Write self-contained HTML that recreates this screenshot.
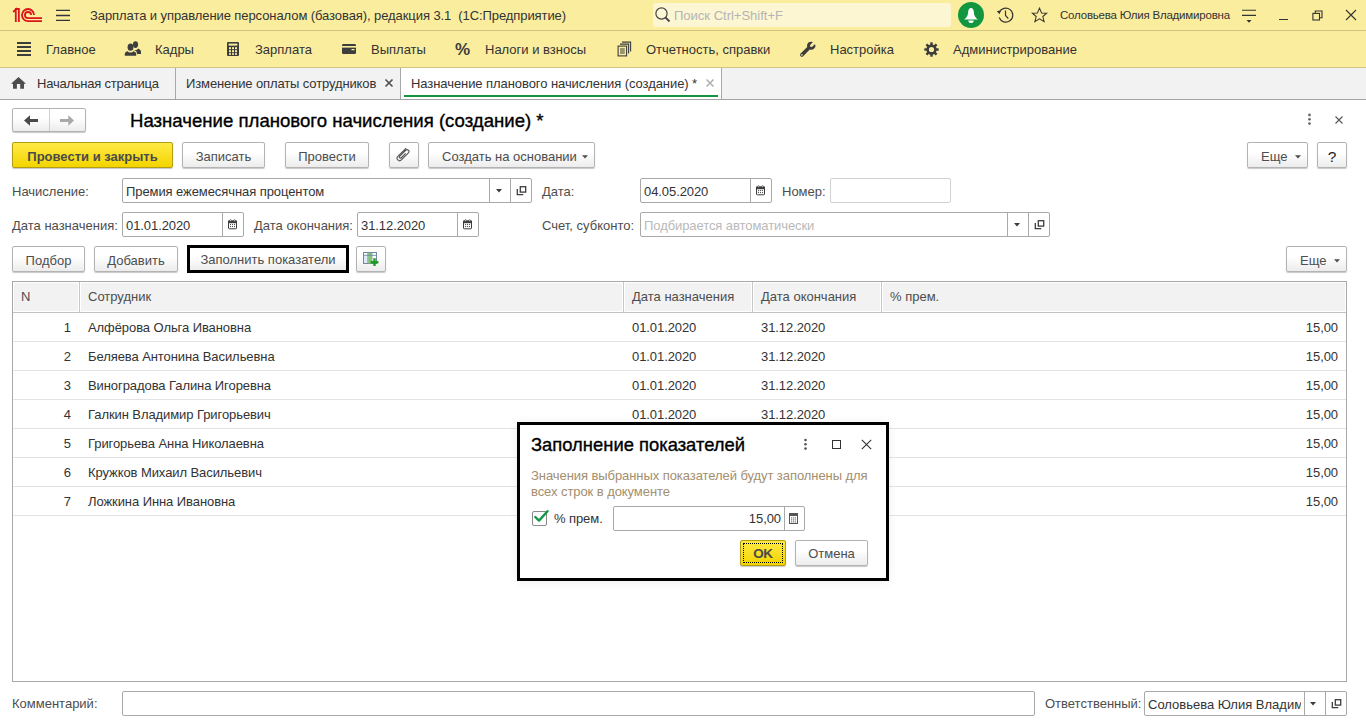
<!DOCTYPE html>
<html><head><meta charset="utf-8">
<style>
*{box-sizing:border-box;margin:0;padding:0}
html,body{width:1366px;height:728px;overflow:hidden;background:#fff;font-family:"Liberation Sans",sans-serif;font-size:13px;color:#333}
.a{position:absolute}
.t{position:absolute;white-space:nowrap;line-height:15px;font-size:13px}
#top{position:absolute;left:0;top:0;width:1366px;height:31px;background:#fbed9e;border-bottom:1px solid #d3c37e}
#menu{position:absolute;left:0;top:31px;width:1366px;height:37px;background:#fbed9e;border-bottom:1px solid #d2c386}
#tabs{position:absolute;left:0;top:68px;width:1366px;height:32px;background:#f2f2f2;border-bottom:1px solid #a3a3a3}
.btn{position:absolute;border:1px solid #b3b3b3;border-radius:2px;background:linear-gradient(#fff 0%,#fff 40%,#ececec 100%);box-shadow:0 1px 1px rgba(0,0,0,.22);color:#4d4d4d;text-align:center;line-height:27px;font-size:13px;white-space:nowrap}
.fld{position:absolute;border:1px solid #a9a9a9;border-radius:2px;background:#fff}
.lbl{position:absolute;white-space:nowrap;line-height:15px;font-size:13px;color:#4d4d4d}
.val{position:absolute;white-space:nowrap;line-height:15px;font-size:13px;color:#333;letter-spacing:-0.08px}
.mi{color:#333}
.tb{color:#333}
.dv{position:absolute;top:0;bottom:0;width:1px;background:#a9a9a9}
</style></head><body>
<!-- TOP BAR -->
<div id="top"></div>
<svg class="a" style="left:12px;top:7px" width="32" height="16" viewBox="0 0 32 16">
 <g fill="none" stroke="#d9141b" stroke-width="1.8">
  <path d="M1.2 5 L3.8 2.4 V14.9"/>
  <path d="M3 2 H6.85 V14.9"/>
  <path d="M22.05 8.05 A6.05 6.05 0 1 0 16 14.1 H30"/>
  <path d="M19.07 8.05 A3.07 3.07 0 1 0 16 11.12 H30"/>
 </g>
</svg>
<svg class="a" style="left:55px;top:9px" width="16" height="13" viewBox="0 0 16 13">
 <g stroke="#333" stroke-width="1.3"><path d="M1 1.4H15M1 6.5H15M1 11.4H15"/></g>
</svg>
<div class="t" style="left:90px;top:8px;color:#333;font-size:13px;letter-spacing:-0.08px">Зарплата и управление персоналом (базовая), редакция 3.1&nbsp; (1С:Предприятие)</div>
<div class="a" style="left:653px;top:3px;width:298px;height:24px;background:#fdf6d2;border-radius:3px"></div>
<svg class="a" style="left:654px;top:6px" width="18" height="18" viewBox="0 0 18 18">
 <circle cx="7.5" cy="7.5" r="5.6" fill="none" stroke="#444" stroke-width="1.2"/>
 <path d="M11.5 11.5 L15.5 15.5" stroke="#444" stroke-width="1.8"/>
</svg>
<div class="t" style="left:674px;top:8px;color:#b4b4b4">Поиск Ctrl+Shift+F</div>
<svg class="a" style="left:958px;top:2px" width="26" height="26" viewBox="0 0 26 26">
 <circle cx="13" cy="13" r="13" fill="#12963f"/>
 <path d="M13 6 C11.5 6 10.4 7.2 10.2 9.5 C9.9 13 9.4 15 6 17.6 H20 C16.6 15 16.1 13 15.8 9.5 C15.6 7.2 14.5 6 13 6Z" fill="#fff"/>
 <path d="M10.2 18.4 H15.8 C15.6 20 14.5 21 13 21 C11.5 21 10.4 20 10.2 18.4Z" fill="#fff"/>
</svg>
<svg class="a" style="left:996px;top:6px" width="19" height="18" viewBox="0 0 19 18">
 <path d="M3.3 6.5 A7 7 0 1 1 3.2 11.5" fill="none" stroke="#333" stroke-width="1.2"/>
 <path d="M0.8 5.2 L4.8 4.2 L3.6 8.2Z" fill="#333"/>
 <path d="M9.5 4.5 V9.5 L12.3 12.6" fill="none" stroke="#333" stroke-width="1.2"/>
</svg>
<svg class="a" style="left:1030.5px;top:7px" width="17" height="17" viewBox="0 0 18 18">
 <path d="M9 1.2 L11.2 6.3 L16.6 6.6 L12.5 10.1 L13.9 15.5 L9 12.5 L4.1 15.5 L5.5 10.1 L1.4 6.6 L6.8 6.3Z" fill="none" stroke="#333" stroke-width="1.1" stroke-linejoin="miter"/>
</svg>
<div class="t" style="left:1060px;top:8px;color:#333;font-size:11.5px;letter-spacing:-0.2px">Соловьева Юлия Владимировна</div>
<svg class="a" style="left:1241px;top:8px" width="16" height="16" viewBox="0 0 16 16">
 <path d="M1 2.3H15M1 7.4H15" stroke="#333" stroke-width="1.1"/>
 <path d="M5.5 12 H10.5 L8 14.8Z" fill="#333"/>
</svg>
<div class="a" style="left:1279px;top:18.5px;width:9px;height:1.2px;background:#333"></div>
<svg class="a" style="left:1312px;top:10px" width="11" height="11" viewBox="0 0 11 11">
 <path d="M3.3 3.2 V1 H10 V7.7 H7.8" fill="none" stroke="#333" stroke-width="1.1"/>
 <rect x="0.9" y="3.4" width="6.6" height="6.6" fill="none" stroke="#333" stroke-width="1.1"/>
</svg>
<svg class="a" style="left:1345px;top:9px" width="12" height="12" viewBox="0 0 12 12">
 <path d="M1 1L11 11M11 1L1 11" stroke="#333" stroke-width="1.1"/>
</svg>

<!-- MENU -->
<div id="menu"></div>
<svg class="a" style="left:17px;top:42px" width="14" height="14" viewBox="0 0 14 14">
 <g fill="#3d3d3d"><rect x="0" y="0" width="14" height="2"/><rect x="0" y="4" width="14" height="2"/><rect x="0" y="8" width="14" height="2"/><rect x="0" y="12" width="14" height="2"/></g>
</svg>
<div class="t mi" style="left:46px;top:42px">Главное</div>
<svg class="a" style="left:124px;top:41px" width="18" height="16" viewBox="0 0 18 16">
 <g fill="#3d3d3d">
  <ellipse cx="11.5" cy="3.6" rx="2.6" ry="3.4"/>
  <path d="M9 7.5 C9.5 8.6 10.5 9 11.5 9 C12.5 9 13.5 8.6 14 7.5 C16.3 8.3 17 9.5 17 11 V13 H13 C13 11 12 9.8 10.5 9.3Z"/>
  <ellipse cx="6.5" cy="6.2" rx="2.9" ry="3.6"/>
  <path d="M3.8 10.2 C4.4 11.2 5.4 11.6 6.5 11.6 C7.6 11.6 8.6 11.2 9.2 10.2 C11.7 10.8 12.2 11.9 12.2 13.2 V14.8 H0.8 V13.2 C0.8 11.9 1.3 10.8 3.8 10.2Z"/>
 </g>
</svg>
<div class="t mi" style="left:155px;top:42px">Кадры</div>
<svg class="a" style="left:226px;top:41px" width="14" height="16" viewBox="0 0 14 16">
 <rect x="1" y="1" width="12" height="14" rx="1" fill="#3d3d3d"/>
 <rect x="2.6" y="2.6" width="8.8" height="2" fill="#fbed9e"/>
 <g fill="#fbed9e">
  <rect x="3" y="6.2" width="2" height="2"/><rect x="6" y="6.2" width="2" height="2"/><rect x="9" y="6.2" width="2" height="2"/>
  <rect x="3" y="9.2" width="2" height="2"/><rect x="6" y="9.2" width="2" height="2"/><rect x="9" y="9.2" width="2" height="2"/>
  <rect x="3" y="12.2" width="2" height="1.6"/><rect x="6" y="12.2" width="2" height="1.6"/><rect x="9" y="12.2" width="2" height="1.6"/>
 </g>
</svg>
<div class="t mi" style="left:255px;top:42px">Зарплата</div>
<svg class="a" style="left:341px;top:43px" width="16" height="12" viewBox="0 0 16 12">
 <rect x="1" y="1" width="14" height="10" rx="1.2" fill="#3d3d3d"/>
 <rect x="1" y="3" width="14" height="1.6" fill="#fbed9e"/>
 <rect x="10.5" y="6" width="3" height="1.2" fill="#fbed9e"/>
</svg>
<div class="t mi" style="left:371px;top:42px">Выплаты</div>
<div class="t" style="left:455px;top:41px;font-size:17px;line-height:18px;font-weight:bold;color:#3d3d3d">%</div>
<div class="t mi" style="left:485px;top:42px">Налоги и взносы</div>
<svg class="a" style="left:617px;top:41px" width="15" height="16" viewBox="0 0 15 16">
 <g fill="none" stroke="#3d3d3d" stroke-width="1.1">
  <path d="M5 1.1 H13.6 V10.5"/>
  <path d="M3 3.1 H11.6 V12.5"/>
 </g>
 <rect x="1.1" y="5.1" width="8.5" height="9.8" fill="#fbed9e" stroke="#3d3d3d" stroke-width="1.1"/>
 <path d="M3 8H7.8M3 10H7.8M3 12H7.8" stroke="#3d3d3d" stroke-width="1"/>
</svg>
<div class="t mi" style="left:646px;top:42px">Отчетность, справки</div>
<svg class="a" style="left:799px;top:40px" width="18" height="18" viewBox="0 0 18 18">
 <path d="M15.8 4.2 L13 6.9 L11.2 6.8 L11.1 5 L13.8 2.2 C11.8 1.3 9.3 2 8.4 4.1 C8 5 7.9 6 8.2 7 L1.6 13.6 C0.9 14.3 0.9 15.5 1.6 16.2 C2.3 16.9 3.5 16.9 4.2 16.2 L10.8 9.6 C13.7 10.5 16.5 8.4 16.5 5.6 C16.5 5.1 16.3 4.6 15.8 4.2Z" fill="#3d3d3d"/>
 <circle cx="2.9" cy="14.9" r="0.8" fill="#fbed9e"/>
</svg>
<div class="t mi" style="left:830px;top:42px">Настройка</div>
<svg class="a" style="left:924px;top:42px" width="15" height="15" viewBox="0 0 15 15">
 <g fill="#3d3d3d"><rect x="6.3" y="0.3" width="2.4" height="3.2" transform="rotate(0 7.5 7.5)"/><rect x="6.3" y="0.3" width="2.4" height="3.2" transform="rotate(45 7.5 7.5)"/><rect x="6.3" y="0.3" width="2.4" height="3.2" transform="rotate(90 7.5 7.5)"/><rect x="6.3" y="0.3" width="2.4" height="3.2" transform="rotate(135 7.5 7.5)"/><rect x="6.3" y="0.3" width="2.4" height="3.2" transform="rotate(180 7.5 7.5)"/><rect x="6.3" y="0.3" width="2.4" height="3.2" transform="rotate(225 7.5 7.5)"/><rect x="6.3" y="0.3" width="2.4" height="3.2" transform="rotate(270 7.5 7.5)"/><rect x="6.3" y="0.3" width="2.4" height="3.2" transform="rotate(315 7.5 7.5)"/></g>
 <circle cx="7.5" cy="7.5" r="3.9" fill="none" stroke="#3d3d3d" stroke-width="2.6"/>
</svg>
<div class="t mi" style="left:953px;top:42px">Администрирование</div>

<!-- TABS -->
<div id="tabs"></div>
<svg class="a" style="left:11px;top:76px" width="16" height="13" viewBox="0 0 16 13">
 <path d="M7.5 0.9 L15 7.7 H13 V12.8 H9.2 V7.9 H5.9 V12.8 H2 V7.7 H0Z" fill="#4d4d4d"/>
</svg>
<div class="t tb" style="left:37px;top:76px;letter-spacing:-0.22px">Начальная страница</div>
<div class="a" style="left:175px;top:68px;width:1px;height:31px;background:#a8a8a8"></div>
<div class="t tb" style="left:186px;top:76px;letter-spacing:-0.12px">Изменение оплаты сотрудников</div>
<svg class="a" style="left:384px;top:78px" width="10" height="10" viewBox="0 0 10 10"><path d="M1.5 1.5L8.5 8.5M8.5 1.5L1.5 8.5" stroke="#4d4d4d" stroke-width="1.6"/></svg>
<div class="a" style="left:400px;top:68px;width:322px;height:32px;background:#fff;border-left:1px solid #a8a8a8;border-right:1px solid #a8a8a8;border-bottom:1px solid #a3a3a3"></div>
<div class="a" style="left:404px;top:95px;width:314px;height:2px;background:#12963f"></div>
<div class="t tb" style="left:411px;top:76px;letter-spacing:-0.07px">Назначение планового начисления (создание) *</div>
<svg class="a" style="left:705px;top:78px" width="10" height="10" viewBox="0 0 10 10"><path d="M1.5 1.5L8.5 8.5M8.5 1.5L1.5 8.5" stroke="#b0b0b0" stroke-width="1.6"/></svg>

<!-- FORM HEADER -->
<div class="btn" style="left:12px;top:108px;width:74px;height:24px"></div>
<div class="a" style="left:49px;top:109px;width:1px;height:22px;background:#cfcfcf"></div>
<svg class="a" style="left:23px;top:114px" width="16" height="13" viewBox="0 0 16 13">
 <path d="M1 6.5 L7 1.3 V5 H15 V8 H7 V11.8Z" fill="#4a4a4a"/>
</svg>
<svg class="a" style="left:59px;top:114px" width="16" height="13" viewBox="0 0 16 13">
 <path d="M15 6.5 L9.3 1.3 V5 H1 V8 H9.3 V11.8Z" fill="#a9a9a9"/>
</svg>
<div class="t" style="left:130px;top:110.5px;font-size:18.6px;line-height:20px;color:#000;-webkit-text-stroke:0.35px #000">Назначение планового начисления (создание) *</div>
<svg class="a" style="left:1306px;top:113px" width="7" height="13" viewBox="0 0 7 13">
 <g fill="#6b6b6b"><circle cx="3.5" cy="2" r="1.4"/><circle cx="3.5" cy="6.3" r="1.4"/><circle cx="3.5" cy="10.6" r="1.4"/></g>
</svg>
<svg class="a" style="left:1334px;top:115px" width="10" height="10" viewBox="0 0 10 10"><path d="M1.5 1.5L8.5 8.5M8.5 1.5L1.5 8.5" stroke="#555" stroke-width="1.1"/></svg>

<div class="btn" style="left:12px;top:142px;width:161px;height:26px;background:linear-gradient(#ffea45,#f3d400);border-color:#b39d12;color:#4a4a4a;font-weight:bold">Провести и закрыть</div>
<div class="btn" style="left:182px;top:142px;width:83px;height:26px">Записать</div>
<div class="btn" style="left:285px;top:142px;width:84px;height:26px">Провести</div>
<div class="btn" style="left:389px;top:142px;width:30px;height:26px"></div>
<svg class="a" style="left:396px;top:146px" width="16" height="17" viewBox="0 0 16 17">
 <g transform="translate(8 8.5) rotate(-45)">
 <path d="M6 -3 H-5.7 A2.5 2.5 0 0 0 -5.7 2 H4.2 A1.9 1.9 0 0 0 4.2 -1.8 H-4.2 A1.1 1.1 0 0 0 -4.2 0.4 H2" fill="none" stroke="#555" stroke-width="1.1"/>
 </g>
</svg>
<div class="btn" style="left:428px;top:142px;width:167px;height:26px;text-align:left;padding-left:13px">Создать на основании</div>
<svg class="a" style="left:582px;top:155px" width="6" height="4" viewBox="0 0 6 4"><path d="M0 0.2H6L3 3.4Z" fill="#4d4d4d"/></svg>
<div class="btn" style="left:1247px;top:142px;width:61px;height:26px;text-align:left;padding-left:13px">Еще</div>
<svg class="a" style="left:1295px;top:155px" width="6" height="4" viewBox="0 0 6 4"><path d="M0 0.2H6L3 3.4Z" fill="#4d4d4d"/></svg>
<div class="btn" style="left:1317px;top:142px;width:30px;height:26px;color:#222;font-size:15.5px">?</div>

<!-- ROW 1 -->
<div class="lbl" style="left:12px;top:184px">Начисление:</div>
<div class="fld" style="left:122px;top:178px;width:410px;height:25px"><div class="dv" style="left:366px"></div><div class="dv" style="left:387px"></div></div>
<div class="val" style="left:126px;top:184px">Премия ежемесячная процентом</div>
<svg class="a" style="left:496px;top:189px" width="6" height="4" viewBox="0 0 6 4"><path d="M0 0H6L3 3.5Z" fill="#3d3d3d"/></svg>
<svg class="a" style="left:516px;top:185px" width="11" height="11" viewBox="0 0 11 11">
 <path d="M2 4.6 H1.3 V9.6 H6.6 V9" fill="none" stroke="#3d3d3d" stroke-width="1.3"/>
 <rect x="4.3" y="1.7" width="5.4" height="5.4" fill="none" stroke="#3d3d3d" stroke-width="1.3"/>
</svg>
<div class="lbl" style="left:542px;top:184px">Дата:</div>
<div class="fld" style="left:640px;top:178px;width:132px;height:25px"><div class="dv" style="left:109px"></div></div>
<div class="val" style="left:644px;top:184px">04.05.2020</div>
<svg class="cal a" style="left:755px;top:185px" width="11" height="11" viewBox="0 0 11 11">
 <rect x="1.5" y="2" width="8" height="7.8" rx="0.8" fill="#fff" stroke="#3d3d3d" stroke-width="1"/>
 <rect x="1" y="1.6" width="9" height="2.6" fill="#3d3d3d"/>
 <g fill="#3d3d3d"><circle cx="3.5" cy="5.6" r="0.6"/><circle cx="5.5" cy="5.6" r="0.6"/><circle cx="7.5" cy="5.6" r="0.6"/><circle cx="3.5" cy="7.6" r="0.6"/><circle cx="5.5" cy="7.6" r="0.6"/><circle cx="7.5" cy="7.6" r="0.6"/></g>
 <g fill="#fff" stroke="#3d3d3d" stroke-width="0.5"><rect x="2.9" y="0.5" width="1.2" height="1.8" rx="0.5"/><rect x="6.9" y="0.5" width="1.2" height="1.8" rx="0.5"/></g>
</svg>
<div class="lbl" style="left:782px;top:184px">Номер:</div>
<div class="fld" style="left:830px;top:178px;width:121px;height:25px;border-color:#d2d2d2"></div>

<!-- ROW 2 -->
<div class="lbl" style="left:12px;top:218px">Дата назначения:</div>
<div class="fld" style="left:122px;top:212px;width:122px;height:25px"><div class="dv" style="left:99px"></div></div>
<div class="val" style="left:126px;top:218px">01.01.2020</div>


<div class="lbl" style="left:254px;top:218px">Дата окончания:</div>
<div class="fld" style="left:357px;top:212px;width:122px;height:25px"><div class="dv" style="left:99px"></div></div>
<div class="val" style="left:361px;top:218px">31.12.2020</div>
<svg class="cal a" style="left:227px;top:219px" width="11" height="11" viewBox="0 0 11 11">
 <rect x="1.5" y="2" width="8" height="7.8" rx="0.8" fill="#fff" stroke="#3d3d3d" stroke-width="1"/>
 <rect x="1" y="1.6" width="9" height="2.6" fill="#3d3d3d"/>
 <g fill="#3d3d3d"><circle cx="3.5" cy="5.6" r="0.6"/><circle cx="5.5" cy="5.6" r="0.6"/><circle cx="7.5" cy="5.6" r="0.6"/><circle cx="3.5" cy="7.6" r="0.6"/><circle cx="5.5" cy="7.6" r="0.6"/><circle cx="7.5" cy="7.6" r="0.6"/></g>
 <g fill="#fff" stroke="#3d3d3d" stroke-width="0.5"><rect x="2.9" y="0.5" width="1.2" height="1.8" rx="0.5"/><rect x="6.9" y="0.5" width="1.2" height="1.8" rx="0.5"/></g>
</svg>
<svg class="cal a" style="left:462px;top:219px" width="11" height="11" viewBox="0 0 11 11">
 <rect x="1.5" y="2" width="8" height="7.8" rx="0.8" fill="#fff" stroke="#3d3d3d" stroke-width="1"/>
 <rect x="1" y="1.6" width="9" height="2.6" fill="#3d3d3d"/>
 <g fill="#3d3d3d"><circle cx="3.5" cy="5.6" r="0.6"/><circle cx="5.5" cy="5.6" r="0.6"/><circle cx="7.5" cy="5.6" r="0.6"/><circle cx="3.5" cy="7.6" r="0.6"/><circle cx="5.5" cy="7.6" r="0.6"/><circle cx="7.5" cy="7.6" r="0.6"/></g>
 <g fill="#fff" stroke="#3d3d3d" stroke-width="0.5"><rect x="2.9" y="0.5" width="1.2" height="1.8" rx="0.5"/><rect x="6.9" y="0.5" width="1.2" height="1.8" rx="0.5"/></g>
</svg>
<div class="lbl" style="left:542px;top:218px">Счет, субконто:</div>
<div class="fld" style="left:640px;top:212px;width:410px;height:25px"><div class="dv" style="left:366px"></div><div class="dv" style="left:387px"></div></div>
<div class="val" style="left:644px;top:218px;color:#b9b9b9">Подбирается автоматически</div>
<svg class="a" style="left:1014px;top:223px" width="6" height="4" viewBox="0 0 6 4"><path d="M0 0H6L3 3.5Z" fill="#3d3d3d"/></svg>
<svg class="a" style="left:1034px;top:219px" width="11" height="11" viewBox="0 0 11 11">
 <path d="M2 4.6 H1.3 V9.6 H6.6 V9" fill="none" stroke="#3d3d3d" stroke-width="1.3"/>
 <rect x="4.3" y="1.7" width="5.4" height="5.4" fill="none" stroke="#3d3d3d" stroke-width="1.3"/>
</svg>

<!-- ROW 3 -->
<div class="btn" style="left:12px;top:246px;width:73px;height:26px">Подбор</div>
<div class="btn" style="left:94px;top:246px;width:84px;height:26px">Добавить</div>
<div class="a" style="left:187px;top:245px;width:162px;height:28px;border:3px solid #000;background:linear-gradient(#fff 0%,#fff 40%,#ececec 100%)"></div>
<div class="t" style="left:187px;top:252px;width:162px;text-align:center;color:#4d4d4d">Заполнить показатели</div>
<div class="btn" style="left:356px;top:246px;width:30px;height:26px"></div>
<svg class="a" style="left:362px;top:251px" width="18" height="16" viewBox="0 0 18 16">
 <rect x="1.5" y="1.5" width="13" height="11" fill="#fff" stroke="#6f8aa3" stroke-width="1"/>
 <rect x="2" y="4.6" width="3.6" height="7.4" fill="#dde9f5"/>
 <rect x="6.3" y="2" width="3.2" height="10.5" fill="#7ccc5e"/>
 <path d="M1.5 4.3 H14.5 M5.9 1.5 V12.5 M9.9 1.5 V12.5" stroke="#6f8aa3" stroke-width="0.9"/>
 <path d="M12.5 7.3 V15 M8.6 11.2 H16.4" stroke="#1f9b1f" stroke-width="2.4"/>
</svg>
<div class="btn" style="left:1286px;top:246px;width:61px;height:26px;text-align:left;padding-left:13px">Еще</div>
<svg class="a" style="left:1334px;top:259px" width="6" height="4" viewBox="0 0 6 4"><path d="M0 0.2H6L3 3.4Z" fill="#4d4d4d"/></svg>

<!-- TABLE -->
<div class="a" style="left:12px;top:281px;width:1335px;height:401px;border:1px solid #a8a8a8;background:#fff"></div>
<div class="a" style="left:13px;top:282px;width:1333px;height:30px;background:#c8c8c8"></div>
<div class="a" style="left:13px;top:282px;width:66px;height:30px;border:1px solid #fff;background:#f2f2f2"></div>
<div class="a" style="left:80px;top:282px;width:543px;height:30px;border:1px solid #fff;background:#f2f2f2"></div>
<div class="a" style="left:624px;top:282px;width:128px;height:30px;border:1px solid #fff;background:#f2f2f2"></div>
<div class="a" style="left:753px;top:282px;width:128px;height:30px;border:1px solid #fff;background:#f2f2f2"></div>
<div class="a" style="left:882px;top:282px;width:464px;height:30px;border:1px solid #fff;background:#f2f2f2"></div>
<div class="a" style="left:13px;top:312px;width:1333px;height:1px;background:#c2c2c2"></div>
<div class="lbl" style="left:21px;top:289px">N</div>
<div class="lbl" style="left:88px;top:289px">Сотрудник</div>
<div class="lbl" style="left:632px;top:289px">Дата назначения</div>
<div class="lbl" style="left:761px;top:289px">Дата окончания</div>
<div class="lbl" style="left:890px;top:289px">% прем.</div>
<div class="a" style="left:13px;top:341px;width:1333px;height:1px;background:#e3e3e3"></div>
<div class="val" style="left:40px;top:320px;width:31px;text-align:right">1</div>
<div class="val" style="left:88px;top:320px">Алфёрова Ольга Ивановна</div>
<div class="val" style="left:632px;top:320px">01.01.2020</div>
<div class="val" style="left:761px;top:320px">31.12.2020</div>
<div class="val" style="left:1250px;top:320px;width:88px;text-align:right">15,00</div>
<div class="a" style="left:13px;top:370px;width:1333px;height:1px;background:#e3e3e3"></div>
<div class="val" style="left:40px;top:349px;width:31px;text-align:right">2</div>
<div class="val" style="left:88px;top:349px">Беляева Антонина Васильевна</div>
<div class="val" style="left:632px;top:349px">01.01.2020</div>
<div class="val" style="left:761px;top:349px">31.12.2020</div>
<div class="val" style="left:1250px;top:349px;width:88px;text-align:right">15,00</div>
<div class="a" style="left:13px;top:399px;width:1333px;height:1px;background:#e3e3e3"></div>
<div class="val" style="left:40px;top:378px;width:31px;text-align:right">3</div>
<div class="val" style="left:88px;top:378px">Виноградова Галина Игоревна</div>
<div class="val" style="left:632px;top:378px">01.01.2020</div>
<div class="val" style="left:761px;top:378px">31.12.2020</div>
<div class="val" style="left:1250px;top:378px;width:88px;text-align:right">15,00</div>
<div class="a" style="left:13px;top:428px;width:1333px;height:1px;background:#e3e3e3"></div>
<div class="val" style="left:40px;top:407px;width:31px;text-align:right">4</div>
<div class="val" style="left:88px;top:407px">Галкин Владимир Григорьевич</div>
<div class="val" style="left:632px;top:407px">01.01.2020</div>
<div class="val" style="left:761px;top:407px">31.12.2020</div>
<div class="val" style="left:1250px;top:407px;width:88px;text-align:right">15,00</div>
<div class="a" style="left:13px;top:457px;width:1333px;height:1px;background:#e3e3e3"></div>
<div class="val" style="left:40px;top:436px;width:31px;text-align:right">5</div>
<div class="val" style="left:88px;top:436px">Григорьева Анна Николаевна</div>
<div class="val" style="left:632px;top:436px">01.01.2020</div>
<div class="val" style="left:761px;top:436px">31.12.2020</div>
<div class="val" style="left:1250px;top:436px;width:88px;text-align:right">15,00</div>
<div class="a" style="left:13px;top:486px;width:1333px;height:1px;background:#e3e3e3"></div>
<div class="val" style="left:40px;top:465px;width:31px;text-align:right">6</div>
<div class="val" style="left:88px;top:465px">Кружков Михаил Васильевич</div>
<div class="val" style="left:632px;top:465px">01.01.2020</div>
<div class="val" style="left:761px;top:465px">31.12.2020</div>
<div class="val" style="left:1250px;top:465px;width:88px;text-align:right">15,00</div>
<div class="a" style="left:13px;top:515px;width:1333px;height:1px;background:#e3e3e3"></div>
<div class="val" style="left:40px;top:494px;width:31px;text-align:right">7</div>
<div class="val" style="left:88px;top:494px">Ложкина Инна Ивановна</div>
<div class="val" style="left:632px;top:494px">01.01.2020</div>
<div class="val" style="left:761px;top:494px">31.12.2020</div>
<div class="val" style="left:1250px;top:494px;width:88px;text-align:right">15,00</div>

<!-- FOOTER -->
<div class="lbl" style="left:12px;top:696px">Комментарий:</div>
<div class="fld" style="left:122px;top:691px;width:913px;height:25px"></div>
<div class="lbl" style="left:1045px;top:696px">Ответственный:</div>
<div class="fld" style="left:1144px;top:691px;width:203px;height:25px;overflow:hidden"><div class="dv" style="left:159px"></div><div class="dv" style="left:180px"></div>
<div class="val" style="left:3px;top:5px;width:153px;overflow:hidden;letter-spacing:0">Соловьева Юлия Владимировна</div></div>
<svg class="a" style="left:1310px;top:702px" width="6" height="4" viewBox="0 0 6 4"><path d="M0 0H6L3 3.5Z" fill="#3d3d3d"/></svg>
<svg class="a" style="left:1331px;top:698px" width="11" height="11" viewBox="0 0 11 11">
 <path d="M2 4.6 H1.3 V9.6 H6.6 V9" fill="none" stroke="#3d3d3d" stroke-width="1.3"/>
 <rect x="4.3" y="1.7" width="5.4" height="5.4" fill="none" stroke="#3d3d3d" stroke-width="1.3"/>
</svg>

<!-- DIALOG -->
<div class="a" style="left:517px;top:422px;width:372px;height:159px;border:3px solid #000;background:#fff;box-shadow:0 1px 10px rgba(0,0,0,0.07)"></div>
<div class="t" style="left:531px;top:435px;font-size:18.4px;line-height:20px;color:#000;-webkit-text-stroke:0.35px #000">Заполнение показателей</div>
<svg class="a" style="left:802px;top:438px" width="7" height="13" viewBox="0 0 7 13">
 <g fill="#555"><circle cx="3.5" cy="2" r="1.3"/><circle cx="3.5" cy="6.3" r="1.3"/><circle cx="3.5" cy="10.6" r="1.3"/></g>
</svg>
<div class="a" style="left:832px;top:440px;width:9px;height:9px;border:1.2px solid #333"></div>
<svg class="a" style="left:861px;top:439px" width="11" height="11" viewBox="0 0 11 11"><path d="M0.8 0.8L10.2 10.2M10.2 0.8L0.8 10.2" stroke="#333" stroke-width="1.1"/></svg>
<div class="t" style="left:531px;top:468px;color:#a38e6e;line-height:16px;letter-spacing:-0.07px">Значения выбранных показателей будут заполнены для<br>всех строк в документе</div>
<div class="a" style="left:532px;top:511px;width:15px;height:15px;border:1px solid #8a8a8a;border-radius:2px;background:#fff"></div>
<svg class="a" style="left:533px;top:509px" width="16" height="15" viewBox="0 0 16 15">
 <path d="M2.3 8 L6 11.6 L14.5 2.2" fill="none" stroke="#139a47" stroke-width="2.4" stroke-linecap="round" stroke-linejoin="round"/>
</svg>
<div class="val" style="left:554px;top:511px">% прем.</div>
<div class="fld" style="left:613px;top:506px;width:192px;height:25px"><div class="dv" style="left:170px"></div></div>
<div class="val" style="left:700px;top:511px;width:81px;text-align:right">15,00</div>
<svg class="a" style="left:788px;top:512px" width="11" height="13" viewBox="0 0 11 13">
 <rect x="1.5" y="1.5" width="8" height="10" fill="none" stroke="#555" stroke-width="1"/>
 <rect x="1.5" y="1.5" width="8" height="2.5" fill="#555"/>
 <g fill="#777"><rect x="3" y="5.3" width="1.2" height="1.2"/><rect x="4.9" y="5.3" width="1.2" height="1.2"/><rect x="6.8" y="5.3" width="1.2" height="1.2"/><rect x="3" y="7.3" width="1.2" height="1.2"/><rect x="4.9" y="7.3" width="1.2" height="1.2"/><rect x="6.8" y="7.3" width="1.2" height="1.2"/><rect x="3" y="9.3" width="1.2" height="1.2"/><rect x="4.9" y="9.3" width="1.2" height="1.2"/><rect x="6.8" y="9.3" width="1.2" height="1.2"/></g>
</svg>
<div class="btn" style="left:740px;top:540px;width:46px;height:26px;background:linear-gradient(#ffea45,#f3d400);border-color:#b39d12;color:#4a4a4a;font-weight:bold;font-size:14px"></div>
<div class="a" style="left:743px;top:543px;width:40px;height:20px;border:1px dotted #000"></div>
<div class="t" style="left:740px;top:546px;width:46px;text-align:center;font-weight:bold;font-size:13.5px;color:#4a4a4a;letter-spacing:-0.3px">OK</div>
<div class="btn" style="left:795px;top:540px;width:73px;height:26px;line-height:26px">Отмена</div>
</body></html>
